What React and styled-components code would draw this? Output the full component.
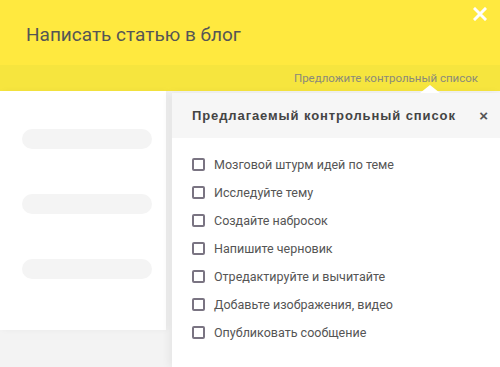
import React from 'react'
import styled, { createGlobalStyle } from 'styled-components'

const GlobalStyle = createGlobalStyle`
    html, body {
        margin: 0;
        padding: 0;
        background: #f3f3f3;
        font-family: Roboto, "Liberation Sans", Arial, sans-serif;
    }
    #root {
        width: 500px;
        height: 367px;
        overflow: hidden;
    }
`

const items = [
    'Мозговой штурм идей по теме',
    'Исследуйте тему',
    'Создайте набросок',
    'Напишите черновик',
    'Отредактируйте и вычитайте',
    'Добавьте изображения, видео',
    'Опубликовать сообщение',
]

function App() {
    return (
        <Page>
            <GlobalStyle />
            <Header>
                <Title>Написать статью в блог</Title>
                <CloseButton aria-label="close">
                    <svg width="14" height="14" viewBox="0 0 14 14">
                        <path d="M2 2 L12 12 M12 2 L2 12" stroke="#fff" strokeWidth="3" strokeLinecap="square" />
                    </svg>
                </CloseButton>
            </Header>
            <SubBar>
                <SuggestLink>Предложите контрольный список</SuggestLink>
            </SubBar>
            <Body>
                <LeftColumn>
                    <Card>
                        <Skeleton />
                        <Skeleton />
                        <Skeleton />
                    </Card>
                </LeftColumn>
                <Popover>
                    <Arrow />
                    <PopoverHeader>
                        <PopoverTitle>Предлагаемый контрольный список</PopoverTitle>
                        <SmallClose>×</SmallClose>
                    </PopoverHeader>
                    <List>
                        {items.map((item) => (
                            <Item key={item}>
                                <Box />
                                <span>{item}</span>
                            </Item>
                        ))}
                    </List>
                </Popover>
            </Body>
        </Page>
    )
}

export default App

const Page = styled.div`
    width: 500px;
    height: 367px;
    display: flex;
    flex-direction: column;
    background: #f3f3f3;
`

const Header = styled.div`
    height: 65px;
    background-color: #ffe93f;
    display: flex;
    align-items: center;
    justify-content: space-between;
    padding: 0 12px 0 26px;
    box-sizing: border-box;
    position: relative;
`

const Title = styled.h1`
    margin: 4px 0 0 0;
    font-size: 19px;
    font-weight: 400;
    color: #555;
`

const CloseButton = styled.div`
    position: absolute;
    top: 7px;
    right: 13px;
    width: 14px;
    height: 14px;
    display: flex;
`

const SubBar = styled.div`
    height: 26px;
    background-color: #f6e53e;
    display: flex;
    align-items: center;
    justify-content: flex-end;
    padding-right: 22px;
`

const SuggestLink = styled.span`
    font-size: 11.5px;
    color: #8a8a7a;
`

const Body = styled.div`
    flex: 1;
    display: flex;
    min-height: 0;
`

const LeftColumn = styled.div`
    width: 166px;
    display: flex;
    flex-direction: column;
`

const Card = styled.div`
    height: 239px;
    background: #fff;
    display: flex;
    flex-direction: column;
    gap: 45px;
    padding: 38px 14px 0 22px;
    box-sizing: border-box;
    box-shadow: 2px 0 6px rgba(0, 0, 0, 0.04);
`

const Skeleton = styled.div`
    height: 20px;
    width: 130px;
    border-radius: 10px;
    background: #f4f4f4;
`

const Popover = styled.div`
    flex: 1;
    margin: 2px 0 0 6px;
    background: #fff;
    position: relative;
    box-shadow: -3px 0 8px rgba(0, 0, 0, 0.06);
`

const Arrow = styled.div`
    position: absolute;
    top: -8px;
    right: 60px;
    width: 0;
    height: 0;
    border-left: 10px solid transparent;
    border-right: 10px solid transparent;
    border-bottom: 8px solid #fff;
`

const PopoverHeader = styled.div`
    height: 45px;
    background: #f6f6f6;
    display: flex;
    align-items: center;
    justify-content: space-between;
    padding: 0 12px 0 20px;
`

const PopoverTitle = styled.span`
    font-family: "Liberation Sans", Arial, sans-serif;
    font-weight: 700;
    font-size: 13px;
    letter-spacing: 0.9px;
    color: #444;
`

const SmallClose = styled.span`
    font-family: "Liberation Sans", Arial, sans-serif;
    font-weight: 700;
    font-size: 15px;
    color: #555;
`

const List = styled.ul`
    list-style: none;
    margin: 0;
    padding: 18px 0 0 20px;
    display: flex;
    flex-direction: column;
    gap: 11px;
`

const Item = styled.li`
    display: flex;
    align-items: center;
    gap: 9px;
    height: 17px;
    font-size: 12.5px;
    color: #555;
`

const Box = styled.span`
    width: 9px;
    height: 9px;
    border: 2px solid #7a7482;
    border-radius: 2px;
    flex-shrink: 0;
`
